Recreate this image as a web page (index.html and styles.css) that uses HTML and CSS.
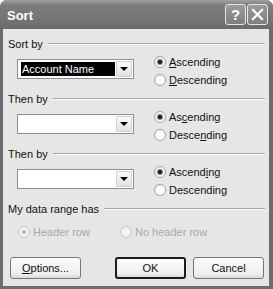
FILE: index.html
```html
<!DOCTYPE html>
<html lang="en">
  <head>
    <meta charset="UTF-8" />
    <title>Sort</title>
    <link rel="stylesheet" href="styles.css">
  </head>
  <body>
    <div class="window">
      <div class="titlebar">
        <span class="title">Sort</span>
        <div class="caption">
          <span class="cap-btn help">?</span>
          <span class="cap-btn">
            <svg width="13" height="13" viewBox="0 0 13 13">
              <path d="M2 2 L11 11 M11 2 L2 11" stroke="#fff" stroke-width="2.2" stroke-linecap="square" />
            </svg>
          </span>
        </div>
      </div>

      <div class="client">
        <div class="group">
          <div class="legend"><span>Sort by</span></div>
          <div class="row">
            <div class="combo">
              <span class="value selected">Account Name</span>
              <span class="drop"><span class="arrow"></span></span>
            </div>
            <div class="radios">
              <div class="radio checked"><span class="dot"></span><span><u>A</u>scending</span></div>
              <div class="radio"><span class="dot"></span><span><u>D</u>escending</span></div>
            </div>
          </div>
        </div>

        <div class="group">
          <div class="legend"><span>Then by</span></div>
          <div class="row">
            <div class="combo">
              <span class="value"></span>
              <span class="drop"><span class="arrow"></span></span>
            </div>
            <div class="radios">
              <div class="radio checked"><span class="dot"></span><span>As<u>c</u>ending</span></div>
              <div class="radio"><span class="dot"></span><span>Desce<u>n</u>ding</span></div>
            </div>
          </div>
        </div>

        <div class="group">
          <div class="legend"><span>Then by</span></div>
          <div class="row">
            <div class="combo">
              <span class="value"></span>
              <span class="drop"><span class="arrow"></span></span>
            </div>
            <div class="radios">
              <div class="radio checked"><span class="dot"></span><span>Ascend<u>i</u>ng</span></div>
              <div class="radio"><span class="dot"></span><span>Descendin<u>g</u></span></div>
            </div>
          </div>
        </div>

        <div class="legend"><span>My data range has</span></div>
        <div class="range">
          <div class="radio checked disabled first"><span class="dot"></span><span>Header row</span></div>
          <div class="radio disabled"><span class="dot"></span><span>No header row</span></div>
        </div>

        <div class="buttons">
          <span class="btn"><u>O</u>ptions...</span>
          <span class="btn default">OK</span>
          <span class="btn">Cancel</span>
        </div>
      </div>
    </div>
  </body>
</html>
```

FILE: styles.css
```css
body {
  margin: 0;
  background: #fff;
  font-family: "Liberation Sans", Arial, sans-serif;
  font-size: 11px;
  color: #111;
}

.window {
  width: 273px;
  height: 289px;
  box-sizing: border-box;
  background: #6c6c6c;
  border-radius: 7px 7px 0 0;
  padding: 0 4px 3px 3px;
  display: flex;
  flex-direction: column;
}

.titlebar {
  height: 29px;
  margin: 0 -4px 0 -3px;
  padding: 0 5px 0 7px;
  border-radius: 7px 7px 0 0;
  background: linear-gradient(#a2a2a2, #7c7c7c 18%, #737373 75%, #6a6a6a);
  display: flex;
  align-items: center;
  justify-content: space-between;

  .title {
    color: #fff;
    font-weight: bold;
    font-size: 13px;
    padding-top: 2px;
  }

  .caption {
    display: flex;
    gap: 1px;
  }

  .cap-btn {
    width: 21px;
    height: 21px;
    box-sizing: border-box;
    border: 1px solid #e4e4e4;
    border-radius: 3px;
    background: linear-gradient(#9c9c9c, #7e7e7e);
    display: flex;
    align-items: center;
    justify-content: center;
    color: #fff;
  }

  .help {
    font-weight: bold;
    font-size: 15px;
  }
}

.client {
  flex: 1;
  background: #e6e6e6;
  padding: 8px 4px 0 5px;
  display: flex;
  flex-direction: column;
}

.group {
  height: 55px;
}

.legend {
  display: flex;
  align-items: center;
  gap: 5px;
  height: 14px;
  line-height: 14px;

  &::after {
    content: "";
    flex: 1;
    border-top: 1px solid #a6a6a6;
    border-bottom: 1px solid #fafafa;
  }
}

.row {
  display: flex;
  margin-top: 2px;
  height: 36px;
}

.combo {
  margin: 6px 0 0 9px;
  width: 117px;
  height: 20px;
  box-sizing: border-box;
  border: 1px solid #8e8e8e;
  background: #fff;
  display: flex;
  padding: 1px;

  .value {
    flex: 1;
    margin: 1px 1px 1px 2px;
    padding-left: 1px;
    line-height: 14px;
  }

  .selected {
    background: #000;
    color: #fff;
  }

  .drop {
    width: 16px;
    box-sizing: border-box;
    border: 1px solid #d0d0d0;
    border-radius: 1px;
    background: linear-gradient(#fafafa, #e2e2e2);
    display: flex;
    align-items: center;
    justify-content: center;
  }

  .arrow {
    width: 0;
    height: 0;
    border-left: 4px solid transparent;
    border-right: 4px solid transparent;
    border-top: 4px solid #000;
  }
}

.radios {
  margin-left: 20px;
  display: flex;
  flex-direction: column;
}

.radio {
  height: 18px;
  display: flex;
  align-items: center;
  gap: 3px;

  .dot {
    width: 12px;
    height: 12px;
    box-sizing: border-box;
    border: 1px solid #a2a2a2;
    border-radius: 50%;
    background: radial-gradient(circle at 60% 60%, #fff 45%, #e2e2e2);
    display: flex;
    align-items: center;
    justify-content: center;
  }

  &.checked .dot::after {
    content: "";
    width: 4px;
    height: 4px;
    border-radius: 50%;
    background: #1a1a1a;
    box-shadow: 0 0 1px 1px #777;
  }

  &.disabled {
    color: #a8a8a8;
  }

  &.disabled .dot {
    border-color: #c6c6c6;
    background: #f2f2f2;
  }

  &.disabled.checked .dot::after {
    background: #b8b8b8;
    box-shadow: none;
  }
}

.range {
  display: flex;
  margin: 7px 0 0 10px;

  .first {
    width: 102px;
  }
}

.buttons {
  display: flex;
  margin: 16px 0 0 2px;

  .btn {
    width: 71px;
    height: 22px;
    box-sizing: border-box;
    border: 1px solid #767676;
    border-radius: 3px;
    background: linear-gradient(#fcfcfc, #eeeeee 80%, #d8d8d8);
    display: flex;
    align-items: center;
    justify-content: center;
  }

  .btn + .btn {
    margin-left: 7px;
  }

  .default {
    margin-left: 34px !important;
    border: 2px solid #1c1c1c;
  }
}
```
